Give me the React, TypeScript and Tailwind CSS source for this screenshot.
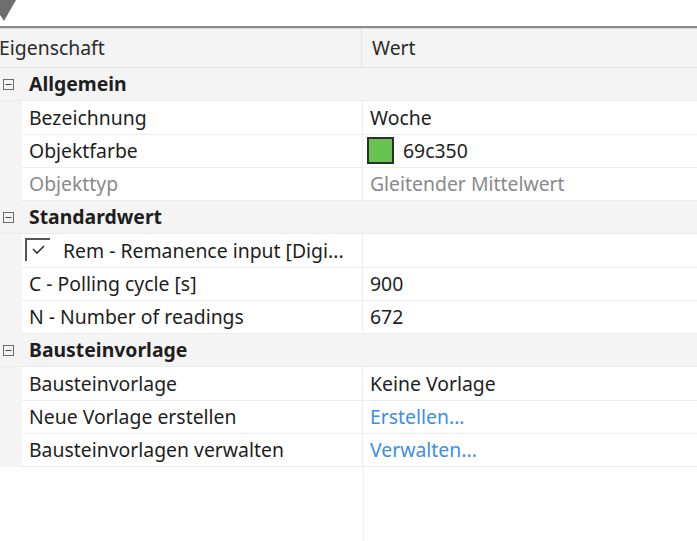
import React from "react";

const font = { fontFamily: '"Noto Sans", "Open Sans", sans-serif' };

function Minus() {
  return (
    <svg width="11" height="11" viewBox="0 0 11 11" className="block">
      <rect x="0.5" y="0.5" width="10" height="10" fill="none" stroke="#6b6b6b" strokeWidth="1" />
      <line x1="2.5" y1="5.5" x2="8.5" y2="5.5" stroke="#444" strokeWidth="1" />
    </svg>
  );
}

function Group({ title }: { title: string }) {
  return (
    <div className="flex h-[33.25px] items-center bg-[#f4f4f4] border-b border-[#ebebeb]">
      <div className="w-[22px] pl-[3px] flex items-center">
        <Minus />
      </div>
      <div className="pl-[7px] font-bold text-[#1e1e1e]">{title}</div>
    </div>
  );
}

function Row({
  name,
  value,
  grey,
  link,
  nameNode,
  valueNode,
}: {
  name?: string;
  value?: string;
  grey?: boolean;
  link?: boolean;
  nameNode?: React.ReactNode;
  valueNode?: React.ReactNode;
}) {
  return (
    <div className="flex h-[33.25px]">
      <div className="w-[22px] bg-[#f4f4f4]" />
      <div className="flex flex-1 border-b border-[#ededed] bg-white">
        <div
          className={`w-[341px] pl-[7px] flex items-center border-r border-[#ededed] whitespace-nowrap overflow-hidden ${
            grey ? "text-[#8a8a8a]" : "text-[#1e1e1e]"
          }`}
        >
          {nameNode ?? name}
        </div>
        <div
          className={`flex-1 pl-[7px] flex items-center whitespace-nowrap ${
            link ? "text-[#3d8ee8]" : grey ? "text-[#8a8a8a]" : "text-[#1e1e1e]"
          }`}
        >
          {valueNode ?? value}
        </div>
      </div>
    </div>
  );
}

export default function App() {
  return (
    <div className="w-[697px] h-[541px] bg-white overflow-hidden relative text-[19.4px] leading-none" style={font}>
      <svg width="16" height="22" viewBox="0 0 16 22" className="absolute left-0 top-0">
        <polygon points="0,0 16,0 4,21 0,15" fill="#6e6e6e" />
      </svg>
      <div className="h-[26px]" />
      <div className="h-[2px] bg-[#8c8c8c]" />
      <div className="h-px bg-[#d8d8d8]" />
      <div className="flex h-[39px] bg-[#f4f4f4] border-b border-[#e4e4e4] text-[#2b2b2b]">
        <div className="w-[363px] flex items-center border-r border-[#e4e4e4] -ml-[1px]">Eigenschaft</div>
        <div className="flex-1 pl-[10px] flex items-center">Wert</div>
      </div>
      <Group title="Allgemein" />
      <Row name="Bezeichnung" value="Woche" />
      <Row
        name="Objektfarbe"
        valueNode={
          <div className="flex items-center">
            <div className="w-[27px] h-[27px] bg-[#69c350] border-2 border-[#2e2e2e] -ml-[3px]" />
            <span className="ml-[9px]">69c350</span>
          </div>
        }
      />
      <Row name="Objekttyp" value="Gleitender Mittelwert" grey />
      <Group title="Standardwert" />
      <Row
        nameNode={
          <div className="flex items-center -ml-[4px]">
            <svg width="26" height="24" viewBox="0 0 26 24" className="block">
              <path d="M1 23 V1 H25" fill="none" stroke="#555" strokeWidth="2" />
              <path d="M8 11 L12 15 L19 8" fill="none" stroke="#333" strokeWidth="1.6" />
            </svg>
            <span className="ml-[12px]">Rem - Remanence input [Digi...</span>
          </div>
        }
        value=""
      />
      <Row name="C - Polling cycle [s]" value="900" />
      <Row name="N - Number of readings" value="672" />
      <Group title="Bausteinvorlage" />
      <Row name="Bausteinvorlage" value="Keine Vorlage" />
      <Row name="Neue Vorlage erstellen" value="Erstellen..." link />
      <Row name="Bausteinvorlagen verwalten" value="Verwalten..." link />
      <div className="flex h-[80px]">
        <div className="w-[363px]" />
        <div className="w-px bg-[#f0f0f0]" />
      </div>
    </div>
  );
}
